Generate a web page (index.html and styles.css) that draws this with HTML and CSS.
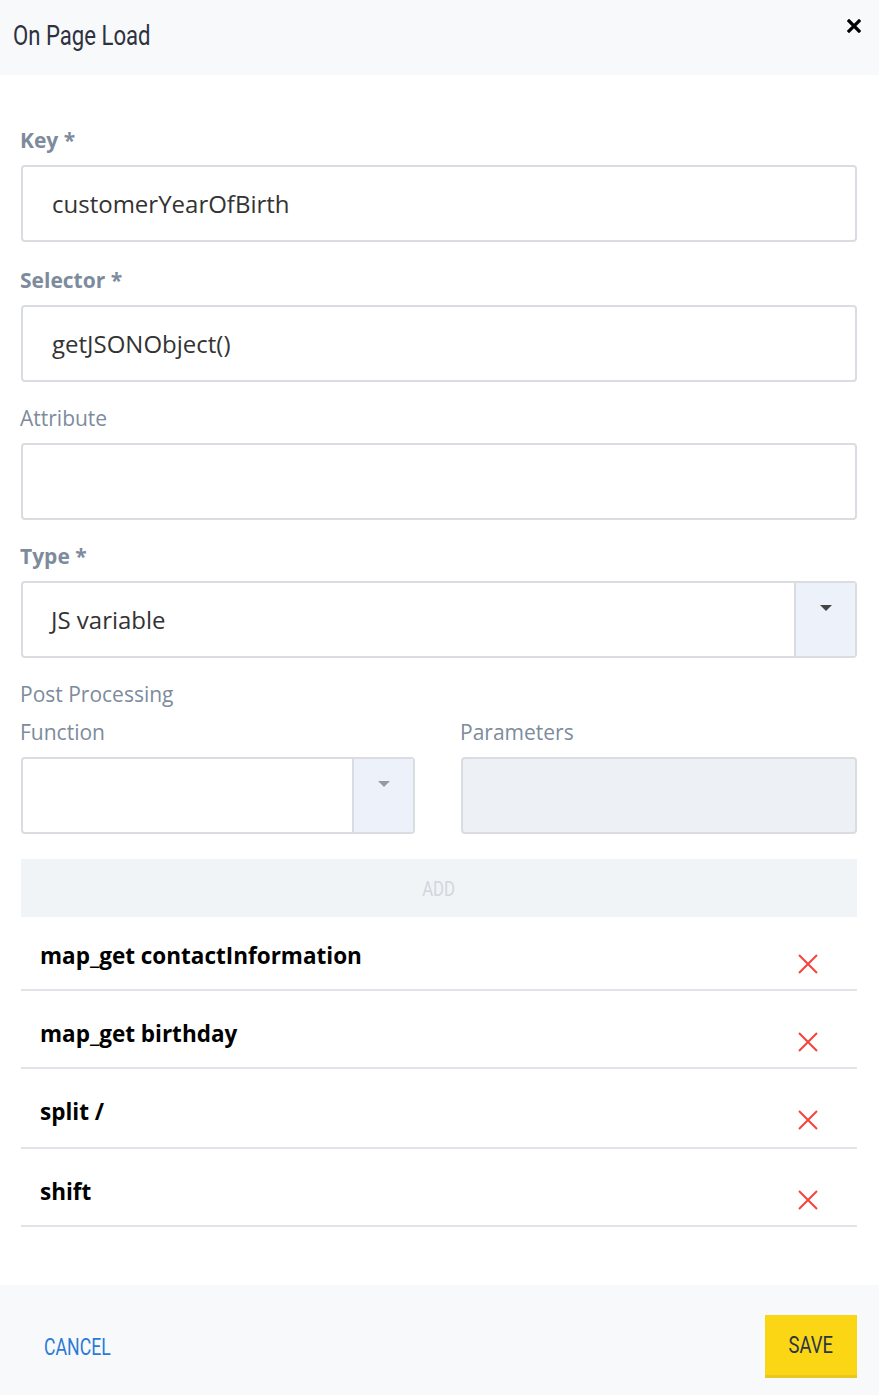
FILE: index.html
```html
<!DOCTYPE html>
<html>
<head>
<meta charset="utf-8">
<link rel="stylesheet" href="styles.css">
</head>
<body>
<div class="modal">
  <header class="head">
    <h1 class="title"><span class="cond">On Page Load</span></h1>
    <svg class="close" width="14" height="14" viewBox="0 0 14 14"><path d="M2 2L12 12M12 2L2 12" stroke="#000" stroke-width="3.2" stroke-linecap="square"/></svg>
  </header>
  <main class="body">
    <div class="field first">
      <label class="label req">Key *</label>
      <div class="input">customerYearOfBirth</div>
    </div>
    <div class="field">
      <label class="label req">Selector *</label>
      <div class="input">getJSONObject()</div>
    </div>
    <div class="field">
      <label class="label">Attribute</label>
      <div class="input"></div>
    </div>
    <div class="field">
      <label class="label req">Type *</label>
      <div class="input select">
        <span class="val">JS variable</span>
        <span class="caret-box"><span class="caret dark"></span></span>
      </div>
    </div>
    <div class="label pp">Post Processing</div>
    <div class="pp-grid">
      <div class="pp-col">
        <label class="label">Function</label>
        <div class="input select">
          <span class="val"></span>
          <span class="caret-box"><span class="caret light"></span></span>
        </div>
      </div>
      <div class="pp-col">
        <label class="label">Parameters</label>
        <div class="input disabled"></div>
      </div>
    </div>
    <div class="add"><span class="cond">ADD</span></div>
    <ul class="list">
      <li class="row"><span class="rtext">map_get contactInformation</span><svg class="rm" width="20" height="20" viewBox="0 0 20 20"><path d="M1 1L19 19M19 1L1 19" stroke="#f4433a" stroke-width="2"/></svg></li>
      <li class="row"><span class="rtext">map_get birthday</span><svg class="rm" width="20" height="20" viewBox="0 0 20 20"><path d="M1 1L19 19M19 1L1 19" stroke="#f4433a" stroke-width="2"/></svg></li>
      <li class="row"><span class="rtext">split /</span><svg class="rm" width="20" height="20" viewBox="0 0 20 20"><path d="M1 1L19 19M19 1L1 19" stroke="#f4433a" stroke-width="2"/></svg></li>
      <li class="row"><span class="rtext">shift</span><svg class="rm" width="20" height="20" viewBox="0 0 20 20"><path d="M1 1L19 19M19 1L1 19" stroke="#f4433a" stroke-width="2"/></svg></li>
    </ul>
  </main>
  <footer class="foot">
    <a class="cancel"><span class="cond">CANCEL</span></a>
    <button class="save"><span class="cond">SAVE</span></button>
  </footer>
</div>
</body>
</html>
```
FILE: styles.css
```css
* { box-sizing: border-box; }
html, body { margin: 0; padding: 0; background: #fff; }
body { font-family: "Open Sans", "Liberation Sans", sans-serif; width: 879px; height: 1395px; overflow: hidden; }
.modal { display: flex; flex-direction: column; height: 1395px; }
.cond { display: inline-block; transform: scaleX(0.8); font-family: Roboto, "Liberation Sans", sans-serif; }
.head {
  height: 75px; background: #f8f9fb;
  display: flex; justify-content: space-between; align-items: flex-start;
  padding: 0 18px 0 13px;
}
.title {
  margin: 0; padding-top: 18px;
  font-weight: 400; font-size: 27px; line-height: 34px; color: #2d3140;
}
.title .cond { transform-origin: left center; transform: scaleX(0.82); }
.close { margin-top: 19px; }
.body { padding: 53px 22px 0 21px; flex: 1; }
.field { margin-bottom: 24px; }
.field.first { margin-bottom: 26px; }
.label {
  display: block; font-size: 21px; line-height: 24px; color: #7d8b9d;
  margin-bottom: 13px; margin-left: -1px;
}
.label.req { font-weight: 700; }
.input {
  height: 77px; border: 2px solid #d9dce1; border-radius: 4px; background: #fff;
  padding: 0 0 0 29px; font-size: 24px; line-height: 74px; color: #333;
}
.select { display: flex; padding-left: 0; }
.select .val { flex: 1; padding-left: 28px; }
.caret-box {
  width: 61px; background: #edf2fa; border-left: 2px solid #d9dce1;
  display: flex; justify-content: center; padding-top: 22px;
}
.caret { width: 0; height: 0; border-left: 6px solid transparent; border-right: 6px solid transparent; border-top: 6px solid #444; }
.caret.light { border-top-color: #9a9a9a; }
.pp { margin-bottom: 14px; }
.pp-grid { display: grid; grid-template-columns: 394px 396px; column-gap: 46px; }
.disabled { background: #edf0f4; }
.add {
  margin-top: 25px; height: 58px; background: #f1f4f7;
  text-align: center; line-height: 58px;
  font-size: 21px; color: #d2d6dd;
}
.list { list-style: none; margin: -4px 0 0; padding: 0; }
.row {
  height: 78px; border-bottom: 2px solid #e2e3e9;
  display: flex; justify-content: space-between; align-items: flex-start;
  padding: 0 39px 0 19px;
}
.row:nth-child(3) { height: 80px; }
.rtext { font-weight: 700; font-size: 22.5px; line-height: 30px; padding-top: 28px; color: #000; }
.rm { margin-top: 41px; }
.foot {
  height: 110px; background: #f8f9fb;
  display: flex; justify-content: space-between; align-items: flex-start;
  padding: 30px 22px 0 44px;
}
.cancel { font-size: 23px; color: #2a7bd6; line-height: 63px; }
.cancel .cond { transform-origin: left center; transform: scaleX(0.77); }
.save {
  width: 92px; height: 63px; border: 0; border-bottom: 3px solid #e8c820; border-radius: 0;
  background: #fad614; color: #2b3447;
  font-size: 23px; padding: 0;
}
```
